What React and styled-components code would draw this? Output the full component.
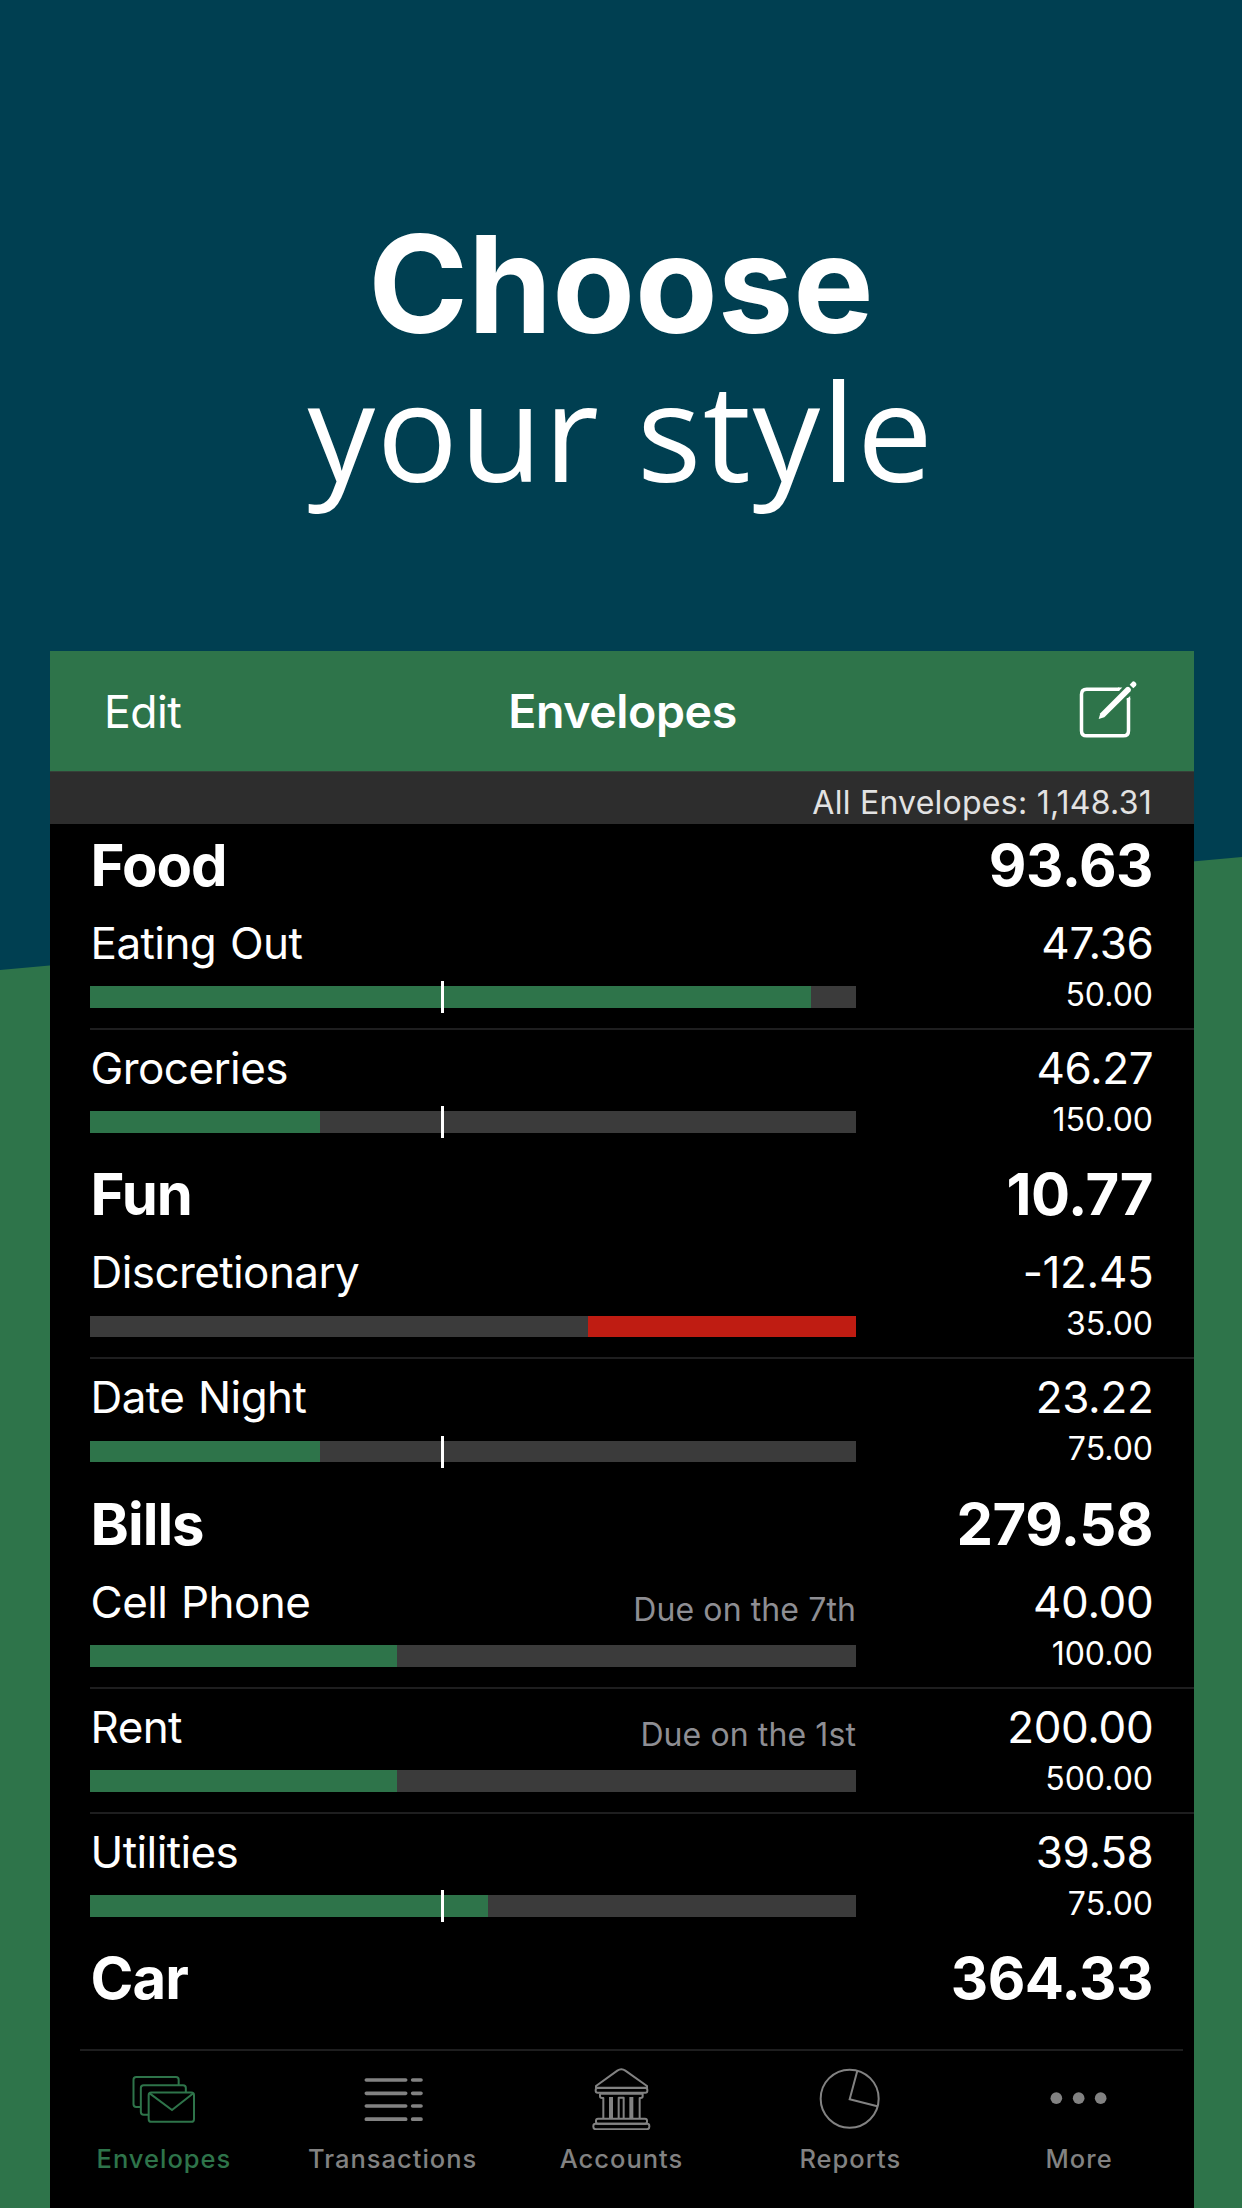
import React from 'react';
import styled, { createGlobalStyle } from 'styled-components';

const colors = {
  navy: '#003f51',
  green: '#2e744a',
  red: '#bf1c12',
  track: '#3b3b3b',
  line: '#1e1e1f',
  muted: '#8e8e93',
  tab: '#828282',
};

const GlobalStyle = createGlobalStyle`
  *, *::before, *::after { box-sizing: border-box; }
  body {
    margin: 0;
    font-family: Inter, "Liberation Sans", sans-serif;
    background: ${colors.navy};
  }
`;

const Page = styled.div`
  position: relative;
  width: 1242px;
  height: 2208px;
  overflow: hidden;
  display: flex;
  flex-direction: column;
  background: ${colors.navy};
  &::before {
    content: '';
    position: absolute;
    inset: 857px 0 0 0;
    background: ${colors.green};
    clip-path: polygon(0 113px, 100% 0, 100% 100%, 0 100%);
  }
`;

const Headline = styled.h1`
  margin: 0;
  height: 651px;
  padding-top: 208px;
  display: flex;
  flex-direction: column;
  align-items: center;
  color: #fff;
  font-size: 135px;
  line-height: 148px;
`;

const Strong = styled.span`
  font-family: Inter, sans-serif;
  font-weight: 700;
  line-height: 153px;
  margin-bottom: -5px;
`;

const Light = styled.span`
  font-family: "Open Sans", sans-serif;
  font-weight: 400;
  letter-spacing: 1.5px;
`;

const Phone = styled.main`
  position: relative;
  width: 1144px;
  flex: 1;
  margin-left: 50px;
  display: flex;
  flex-direction: column;
  background: #000;
  color: #fff;
`;

const NavBar = styled.header`
  height: 120px;
  display: grid;
  grid-template-columns: 1fr auto 1fr;
  align-items: center;
  padding: 0 53px 0 54px;
  background: ${colors.green};
`;

const NavButton = styled.span`
  padding-top: 2px;
  font-size: 44.5px;
  line-height: 60px;
  letter-spacing: -0.5px;
`;

const NavTitle = styled.span`
  font-size: 46.5px;
  font-weight: 600;
  line-height: 60px;
  letter-spacing: -0.4px;
`;

const ComposeIcon = styled.svg`
  justify-self: end;
  width: 66px;
  height: 66px;
`;

const Summary = styled.div`
  height: 53px;
  padding: 6px 42px 0 0;
  background: #2d2d2d;
  border-top: 1px solid #364038;
  color: #e2e2e2;
  font-size: 32px;
  line-height: 50px;
  letter-spacing: 0.25px;
  text-align: right;
`;

const List = styled.section`
  flex: 1;
`;

const GroupHeader = styled.div`
  display: flex;
  justify-content: space-between;
  height: 79.6px;
  padding: 1.6px 41px 0 40.6px;
  font-size: 58px;
  font-weight: 700;
  line-height: 79.6px;
`;

const GroupName = styled.span`
  letter-spacing: -1px;
`;

const GroupTotal = styled.span`
  letter-spacing: -0.5px;
`;

const Row = styled.div`
  position: relative;
  display: grid;
  grid-template-columns: 766px 1fr;
  height: 125px;
  margin-left: 40px;
  padding: 14.2px 40.6px 0 0;
  &::after {
    content: '';
    display: ${p => (p.$last ? 'none' : 'block')};
    position: absolute;
    inset: auto 0 -1px 0;
    height: 2px;
    background: ${colors.line};
  }
`;

const TitleLine = styled.div`
  display: flex;
  justify-content: space-between;
  align-items: flex-start;
  height: 50px;
`;

const Name = styled.span`
  padding-left: 0.6px;
  font-size: 44px;
  line-height: 50px;
  letter-spacing: -0.6px;
  word-spacing: 2px;
`;

const Due = styled.span`
  color: ${colors.muted};
  font-size: 32px;
  line-height: 66.4px;
  letter-spacing: 0.1px;
`;

const Track = styled.div`
  position: relative;
  display: flex;
  justify-content: ${p => (p.$over ? 'flex-end' : 'flex-start')};
  height: 21.6px;
  margin-top: 18.4px;
  background: ${colors.track};
`;

const Fill = styled.div`
  background: ${p => (p.$over ? colors.red : colors.green)};
`;

const Tick = styled.div`
  position: absolute;
  left: 351px;
  top: -5px;
  width: 3px;
  height: 32px;
  background: #fff;
`;

const Amounts = styled.div`
  display: flex;
  flex-direction: column;
  align-items: flex-end;
`;

const Amount = styled.span`
  font-size: 44px;
  line-height: 50px;
  letter-spacing: -0.35px;
`;

const Budget = styled.span`
  margin-top: 6.8px;
  padding-right: 0.4px;
  font-size: 32px;
  line-height: 40px;
`;

const TabBar = styled.nav`
  display: grid;
  grid-template-columns: repeat(5, 1fr);
  height: 159px;
  background: linear-gradient(${colors.line}, ${colors.line}) 30px 0 / 1103px 2px no-repeat;
`;

const Tab = styled.div`
  display: flex;
  flex-direction: column;
  align-items: center;
  padding-top: 17px;
  color: ${p => (p.$active ? colors.green : colors.tab)};
`;

const TabIcon = styled.svg`
  width: 70px;
  height: 64px;
  fill: none;
  stroke: currentColor;
  stroke-width: ${p => p.$weight || 6};
`;

const TabLabel = styled.span`
  margin: 8px 1px 0 0;
  font-size: 25.5px;
  font-weight: 500;
  line-height: 42px;
  letter-spacing: 1px;
`;

const groups = [
  {
    name: 'Food', total: '93.63',
    rows: [
      { name: 'Eating Out', amount: '47.36', budget: '50.00', fill: 94.1, tick: true },
      { name: 'Groceries', amount: '46.27', budget: '150.00', fill: 30, tick: true },
    ],
  },
  {
    name: 'Fun', total: '10.77',
    rows: [
      { name: 'Discretionary', amount: '-12.45', budget: '35.00', fill: 35, over: true },
      { name: 'Date Night', amount: '23.22', budget: '75.00', fill: 30, tick: true },
    ],
  },
  {
    name: 'Bills', total: '279.58',
    rows: [
      { name: 'Cell Phone', amount: '40.00', budget: '100.00', fill: 40.05, due: 'Due on the 7th' },
      { name: 'Rent', amount: '200.00', budget: '500.00', fill: 40.05, due: 'Due on the 1st' },
      { name: 'Utilities', amount: '39.58', budget: '75.00', fill: 52, tick: true },
    ],
  },
  { name: 'Car', total: '364.33', rows: [] },
];

const Compose = () => (
  <ComposeIcon viewBox="45 24 198 198" fill="none" stroke="#fff" strokeWidth="10.500">
    <path d="M178 57.500H80Q64.500 57.500 64.500 73V182Q64.500 197.500 80 197.500H190Q205.500 197.500 205.500 182V84" />
    <path d="M174 52.500H187L178 61.500H174ZM200.500 90V87L210.500 78V90Z" fill="#fff" stroke="none" />
    <path d="M116 147L121 130L199 52Q204 48.500 208 52L212 56.500Q214.500 60.500 211 64.500L133 142Z" fill="#fff" stroke="none" />
    <path d="M209 44L217 35Q221 32 225 36L228 39Q231 43 228 47L220 55Z" fill="#fff" stroke="none" />
  </ComposeIcon>
);

const EnvelopesIcon = () => (
  <TabIcon viewBox="268 108 210 192">
    <path d="M302 231H290Q281.500 231 281.500 223V149Q281.500 141 290 141H409Q417 141 417 149V165" />
    <path d="M326 254H312Q303.500 254 303.500 246V174Q303.500 166 312 166H430Q438.500 166 438.500 174V187" />
    <rect x="327" y="187.500" width="136" height="88" rx="8" />
    <path d="M330 190L397 240L461 190" />
  </TabIcon>
);

const TransactionsIcon = () => (
  <TabIcon viewBox="954 108 210 192" $weight={11} strokeLinecap="round">
    {[150, 190, 228, 267.5].map(y => (
      <path key={y} d={`M979 ${y}H1097M1118 ${y}H1143`} />
    ))}
  </TabIcon>
);

const AccountsIcon = () => (
  <TabIcon viewBox="441 108 210 192" strokeLinejoin="round">
    <path d="M468 173V168L532 122Q544 114 556 122L621 168V173Z" />
    <rect x="467" y="174" width="155" height="14" rx="6" />
    <path d="M480 191H608V199Q608 204 602 204H599V264M480 191V199Q480 204 486 204H490V264" />
    <path d="M510 201V264M516 201V264M536 264V203H551V264M571 201V264M577 201V264" />
    <rect x="468" y="266" width="153" height="15" rx="6" />
    <rect x="460" y="281.500" width="168" height="16" rx="7" />
  </TabIcon>
);

const ReportsIcon = () => (
  <TabIcon viewBox="47 108 210 192">
    <circle cx="148" cy="206" r="87" />
    <path d="M171 122L148 207.500L231 229" />
  </TabIcon>
);

const MoreIcon = () => (
  <TabIcon viewBox="734 108 210 192">
    {[768, 835, 901].map(x => (
      <circle key={x} cx={x} cy="204.500" r="17.500" fill="currentColor" stroke="none" />
    ))}
  </TabIcon>
);

const tabs = [
  { label: 'Envelopes', Icon: EnvelopesIcon, active: true },
  { label: 'Transactions', Icon: TransactionsIcon },
  { label: 'Accounts', Icon: AccountsIcon },
  { label: 'Reports', Icon: ReportsIcon },
  { label: 'More', Icon: MoreIcon },
];

function EnvelopeRow({ row, last }) {
  return (
    <Row $last={last}>
      <div>
        <TitleLine>
          <Name>{row.name}</Name>
          {row.due && <Due>{row.due}</Due>}
        </TitleLine>
        <Track $over={row.over}>
          <Fill $over={row.over} style={{ width: `${row.fill}%` }} />
          {row.tick && <Tick />}
        </Track>
      </div>
      <Amounts>
        <Amount>{row.amount}</Amount>
        <Budget>{row.budget}</Budget>
      </Amounts>
    </Row>
  );
}

export default function App() {
  return (
    <Page>
      <GlobalStyle />
      <Headline>
        <Strong>Choose</Strong>
        <Light>your style</Light>
      </Headline>
      <Phone>
        <NavBar>
          <NavButton>Edit</NavButton>
          <NavTitle>Envelopes</NavTitle>
          <Compose />
        </NavBar>
        <Summary>All Envelopes: 1,148.31</Summary>
        <List>
          {groups.map(g => (
            <React.Fragment key={g.name}>
              <GroupHeader>
                <GroupName>{g.name}</GroupName>
                <GroupTotal>{g.total}</GroupTotal>
              </GroupHeader>
              {g.rows.map((r, i) => (
                <EnvelopeRow key={r.name} row={r} last={i === g.rows.length - 1} />
              ))}
            </React.Fragment>
          ))}
        </List>
        <TabBar>
          {tabs.map(({ label, Icon, active }) => (
            <Tab key={label} $active={active}>
              <Icon />
              <TabLabel>{label}</TabLabel>
            </Tab>
          ))}
        </TabBar>
      </Phone>
    </Page>
  );
}
